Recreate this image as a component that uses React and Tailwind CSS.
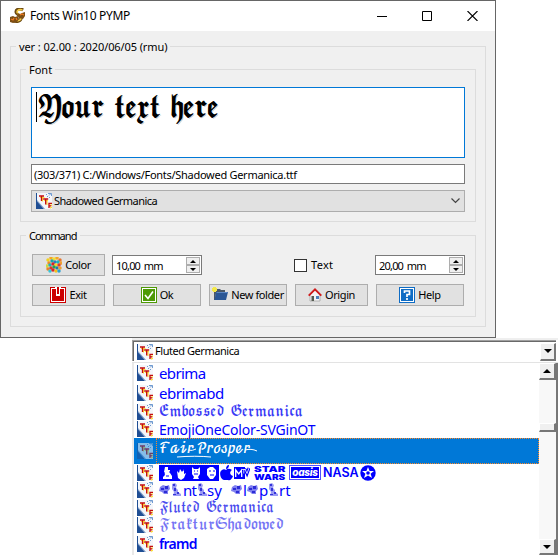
import React from "react";

const ui = "font-['Noto_Sans',sans-serif]";

function TtfIcon({ dim }) {
  return (
    <svg width="16" height="16" viewBox="0 0 16 16" className={"shrink-0 " + (dim ? "opacity-55" : "")}>
      <rect width="16" height="16" fill="#f4f6fa" />
      <path d="M0 0h1v8L8 16H0z" fill="#1f4e94" />
      <path d="M1 7L9 16H8L1 8.5z" fill="#7c9ac6" />
      <path d="M10 1.5h1M12 .5h1M11 3.5h1M13 2.5l2-2M13 .5h2.5v2.5M13 4.5h1" stroke="#6f9ad0" strokeWidth="1" fill="none" />
      <path d="M4 4.5h4.5M6.5 4v4.5M8 7.5h4M11 7v5M14.5 15.5V14.5H16M14 12.2h2" stroke="#ffe037" strokeWidth="1.2" fill="none" />
      <path d="M3 3h5M5.5 3v5M7.2 6h5M9.7 6v5.5M13 15V10.3H16M13 12.8H15.3" stroke="#c40d0d" strokeWidth="1.35" fill="none" />
    </svg>
  );
}

function AppIcon() {
  return (
    <svg width="17" height="16" viewBox="0 0 17 16" className="shrink-0">
      <path d="M14 2C11 0 7 1 7 4s5 3 5 6-4 4-7 3" stroke="#6d4a10" strokeWidth="3.2" fill="none" />
      <path d="M13.5 2C11 1 8 2 8 4s4 3 4 6-3 3-6 3" stroke="#f4cc48" strokeWidth="1.6" fill="none" />
      <path d="M1 9l3-1 2 1 3-1 1 3-2 3-4 1-3-1zM8 5l3 1 2-1 3-1v4l-2 3-4-1z" fill="#7d4f14" />
      <path d="M2 11l2 1 1-2M7 10l1 2M11 7l2-1 2 1" stroke="#ee7a22" strokeWidth="1.3" fill="none" />
    </svg>
  );
}

const dots = [
  [2, 3, "#f2d21b"], [5, 1, "#f5a623"], [8, 2, "#f0e030"], [11, 1, "#f5a623"], [14, 3, "#e8742c"],
  [3, 6, "#ef8a28"], [6, 4, "#1aa6a8"], [9, 5, "#2b7fc1"], [12, 5, "#19b4c0"], [15, 6, "#f0a030"],
  [1, 9, "#cfdc3a"], [4, 8, "#1fafb9"], [7, 7, "#d8232a"], [10, 8, "#f6d928"], [13, 8, "#de3b30"],
  [2, 12, "#e8842c"], [5, 11, "#d93a2c"], [8, 10, "#2ba24a"], [11, 11, "#1b7fb1"], [14, 11, "#f0a030"],
  [4, 14, "#35c5d8"], [7, 13, "#d8232a"], [10, 14, "#f2c21b"], [13, 14, "#2b9fd1"],
];

function ColorIcon() {
  return (
    <svg width="16" height="16" viewBox="0 0 16 16">
      {dots.map(([x, y, c], i) => <circle key={i} cx={x} cy={y} r="1.75" fill={c} />)}
    </svg>
  );
}

function ExitIcon() {
  return (
    <svg width="16" height="16" viewBox="0 0 16 16">
      <rect x=".5" y=".5" width="15" height="15" fill="#fff" stroke="#cc0000" />
      <path d="M2 2h4v7h4V2h4v12H2z" fill="#cc0000" />
      <path d="M5 0h6v2H5z" fill="#fff" />
      <path d="M7 0h2v7H7z" fill="#cc0000" />
    </svg>
  );
}

function OkIcon() {
  return (
    <svg width="16" height="16" viewBox="0 0 16 16">
      <rect x=".5" y=".5" width="15" height="15" fill="#fff" stroke="#4e9a06" />
      <path d="M2 2h12v12H2z" fill="#4e9a06" />
      <path d="M4 8l3 3.5L12 4.5" stroke="#fff" strokeWidth="1.6" fill="none" />
    </svg>
  );
}

function FolderIcon() {
  return (
    <svg width="16" height="16" viewBox="0 0 16 16">
      <path d="M2 2h6l1 1h4v3H4l-1 7H2z" fill="#4b5866" />
      <path d="M4 5h12l-2 8H2.5z" fill="#2b5796" />
      <path d="M4.5 5.5h11" stroke="#5a87c6" />
      <path d="M0 1h1V0h3v1h1v3H4v1H1V4H0z" fill="#f3e84a" />
    </svg>
  );
}

function HomeIcon() {
  return (
    <svg width="14" height="16" viewBox="0 0 14 16">
      <path d="M2 8l5-5 5 5v6H2z" fill="#f5f5f5" stroke="#a5a5a5" strokeWidth=".8" />
      <path d="M3.5 9H6v5H3.5z" fill="#555b52" />
      <path d="M8 9h3v3H8z" fill="#4f81bd" />
      <path d="M.7 8.6L7 2.3l6.3 6.3" stroke="#cf1b1b" strokeWidth="2" fill="none" />
    </svg>
  );
}

function HelpIcon() {
  return (
    <svg width="16" height="16" viewBox="0 0 16 16">
      <rect x=".5" y=".5" width="15" height="15" fill="#fff" stroke="#0f6cc4" />
      <path d="M2 2h12v12H2z" fill="#0f6cc4" />
      <path d="M5.5 6V4h5v3.5H8V10M8 11v2" stroke="#fff" strokeWidth="1.7" fill="none" />
    </svg>
  );
}

function Group({ title, className, legendClass = "", children }) {
  return (
    <fieldset className={"min-w-0 border border-[#dcdcdc] " + className}>
      <legend className={"ml-[5px] h-[15px] whitespace-nowrap px-[3px] leading-[15px] " + legendClass}>{title}</legend>
      {children}
    </fieldset>
  );
}

function Button({ icon, label, className }) {
  return (
    <button className={"flex h-[22px] items-center justify-center gap-[3px] whitespace-nowrap border border-[#adadad] bg-[#e1e1e1] " + className}>
      {icon}
      <span className="tracking-[-0.4px]">{label}</span>
    </button>
  );
}

function Spin({ value }) {
  return (
    <div className="flex h-5 w-[90px] justify-between border border-[#7a7a7a] bg-white py-px pr-px">
      <span className="pl-[3px] leading-[17px] tracking-[-0.8px] [word-spacing:1.5px]">{value}</span>
      <div className="flex w-[14px] flex-col">
        <span className="flex h-2 items-center justify-center border border-[#adadad] bg-[#efefef]">
          <svg width="6" height="3" viewBox="0 0 6 3"><path d="M3 0l3 3H0z" /></svg>
        </span>
        <span className="flex h-2 items-center justify-center border border-[#adadad] bg-[#efefef]">
          <svg width="6" height="3" viewBox="0 0 6 3"><path d="M3 3l3-3H0z" /></svg>
        </span>
      </div>
    </div>
  );
}

function ClassicButton({ dir, className }) {
  return (
    <div className={"flex items-center justify-center border border-b-2 border-r-2 border-white border-b-[#777] border-r-[#777] bg-[#f0f0f0] " + className}>
      {dir && (
        <svg width="8" height="4" viewBox="0 0 8 4"><path d={dir === "up" ? "M4 0l4 4H0z" : "M4 4l4-4H0z"} /></svg>
      )}
    </div>
  );
}

function Row({ className, children }) {
  return (
    <div className={"flex items-center pl-[3px] " + className}>
      <TtfIcon />
      <div className="ml-[6px] flex h-full items-center whitespace-nowrap text-[#0000ff]">{children}</div>
    </div>
  );
}

const fraktur = "origin-left whitespace-nowrap font-['DejaVu_Math_TeX_Gyre','DejaVu_Sans',serif]";

function Clip({ head }) {
  return (
    <svg width={head ? 12 : 10} height="14" viewBox={head ? "0 0 12 14" : "0 0 10 14"}>
      {head ? (
        <g>
          <path d="M1 4l3-2 3 1 3-1 1 4-2 2v3H5L3 9 0 8z" fill="#7f7ff0" />
          <path d="M2 5h3v2H2zM6 3h3v3H6zM5 8h3v2H5z" fill="#2c2cd6" />
        </g>
      ) : (
        <g>
          <path d="M1 1l3-1 2 2-1 3 2 2v2l3 2v2H2l1-4-2-3z" fill="#9a9af4" />
          <path d="M2 1h2v2H2zM3 5h2v3H3zM6 9h2v2H6zM2 11h3v1H2z" fill="#3434da" />
        </g>
      )}
    </svg>
  );
}

function Faces() {
  return (
    <svg width="91" height="16" viewBox="0 0 91 16">
      <path d="M0 0h60v16H0z" fill="#0000ff" />
      <g fill="#fff">
        <path d="M6 2h3v3h2v3l2 3v3H4v-2l2-2-1-3z" />
        <path d="M18 6l2 2 1-4 2 3 2-3v5l2-1-2 5-3 2-3-2z" />
        <path d="M33 2l2 2h4l2-2v7l-2 3 1 2h-6l1-2-2-3z" />
        <path d="M48 4l3-2h3l3 3v5l-3 4h-3l-3-4z" />
      </g>
      <path d="M4 8h2M10 7h2M7 11h3M35 6h1M38 6h1M35 9h4M50 6h2M54 6h2M51 10h4M17 3v3M24 2v4M45 2l3 3M44 9l4 1" stroke="#0000ff" strokeWidth="1" />
      <path d="M67 5c2-2 4-1 6 0-3 2-2 5 1 6-1 3-3 5-5 4h-3c-4 1-7-8-3-10 1-1 3-1 4 0zM67 4c0-2 1-4 3-4 0 2-1 4-3 4z" fill="#0000ff" />
      <path d="M75 2h11v12H75z" fill="#0000ff" />
      <path d="M76.7 12V5l3 4 3-4v7" stroke="#fff" strokeWidth="1.3" fill="none" />
      <path d="M83 4.5h3.5M84.8 4.5v4M86 4l2 4.5L90 3" stroke="#0000ff" strokeWidth="3" fill="none" />
      <path d="M83 4.5h3.5M84.8 4.5v4M86 4l2 4.5L90 3" stroke="#fff" strokeWidth=".8" fill="none" />
    </svg>
  );
}

export default function App() {
  return (
    <div className={"h-[558px] w-[558px] overflow-hidden bg-white text-[11px] text-black " + ui}>
      <div className="h-[338px] w-[496px] border border-[#666] bg-[#f0f0f0]">
        <div className="flex h-[30px] items-center bg-white pl-2">
          <AppIcon />
          <span className="ml-1 text-[12px] tracking-[-0.3px]">Fonts Win10 PYMP</span>
          <div className="ml-auto flex items-center gap-[35px] pr-[17px]">
            <svg width="10" height="10" viewBox="0 0 10 10"><path d="M0 5.5h10" stroke="#000" /></svg>
            <svg width="10" height="10" viewBox="0 0 10 10"><path d="M.5 .5h9v9h-9z" fill="none" stroke="#000" /></svg>
            <svg width="11" height="10" viewBox="0 0 11 10"><path d="M.5 0l10 10M10.5 0L.5 10" stroke="#000" strokeWidth="1.1" /></svg>
          </div>
        </div>

        <Group title="ver : 02.00 : 2020/06/05 (rmu)" legendClass="tracking-[-0.1px]" className="ml-[9px] mt-[8px] h-[288px] w-[476px]">
          <Group title="Font" className="ml-[9px] mt-[8px] h-[160px] w-[456px]">
            <div className="ml-[10px] mt-[10px] flex w-[434px] flex-col">
              <div className="h-[71px] border border-[#0078d7] bg-white pl-1 pt-1">
                <div className="h-[30px] border-l border-black">
                  <div aria-label="Your text here" className={"w-[190px] scale-x-[0.78] text-[29px] leading-[33px] tracking-[-2.2px] [word-spacing:6px] [text-shadow:0.8px_0_0_#000,2px_1px_0_#0003] " + fraktur}>𝖄𝖔𝖚𝖗 𝖙𝖊𝖝𝖙 𝖍𝖊𝖗𝖊</div>
                </div>
              </div>
              <div className="mt-[6px] h-5 border border-[#7a7a7a] bg-white pl-[2px] leading-[19px] tracking-[-0.28px]">(303/371) C:/Windows/Fonts/Shadowed Germanica.ttf</div>
              <div className="mt-[6px] flex h-[22px] items-center border border-[#adadad] bg-[#e1e1e1] pl-1 pr-1">
                <TtfIcon />
                <span className="ml-[2px] tracking-[-0.55px]">Shadowed Germanica</span>
                <svg className="ml-auto" width="9" height="6" viewBox="0 0 9 6"><path d="M.5 .5l4 4 4-4" fill="none" stroke="#444" strokeWidth="1.2" /></svg>
              </div>
            </div>
          </Group>

          <Group title="Command" legendClass="tracking-[-0.9px]" className="ml-[9px] mt-[6px] h-[89px] w-[456px]">
            <div className="ml-[11px] mt-[11px] w-[433px]">
              <div className="flex h-[22px] items-center">
                <Button icon={<ColorIcon />} label="Color" className="w-[73px]" />
                <div className="ml-[7px]"><Spin value="10,00 mm" /></div>
                <div className="ml-[92px] flex items-center gap-1">
                  <span className="h-[13px] w-[13px] border border-[#333] bg-white" />
                  <span className="tracking-[0.3px]">Text</span>
                </div>
                <div className="ml-auto"><Spin value="20,00 mm" /></div>
              </div>
              <div className="mt-2 flex gap-2">
                <Button icon={<ExitIcon />} label="Exit" className="w-[73px]" />
                <Button icon={<OkIcon />} label="Ok" className="w-[88px]" />
                <Button icon={<FolderIcon />} label="New folder" className="w-[78px]" />
                <Button icon={<HomeIcon />} label="Origin" className="w-[73px]" />
                <Button icon={<HelpIcon />} label="Help" className="w-[88px]" />
              </div>
            </div>
          </Group>
        </Group>
      </div>

      <div className="ml-[132px] flex h-[217px] w-[426px] flex-col">
        <div className="h-[2px] bg-[#efefef]" />
        <div className="flex h-[21px] w-[424px] items-stretch border-l border-t border-[#a0a0a0]">
          <div className="flex w-full items-center border-l border-t border-[#696969] bg-white pl-[3px]">
            <TtfIcon />
            <span className="ml-[2px] tracking-[-0.45px]">Fluted Germanica</span>
            <ClassicButton dir="down" className="ml-auto h-[18px] w-4" />
          </div>
        </div>
        <div className="h-[2px] border-b border-[#e3e3e3] bg-white" />
        <div className="flex h-[192px] border-l-2 border-r-2 border-l-[#e9e9e9] border-r-[#777]">
          <div className="w-[405px] text-[15px]">
            <Row className="h-5"><span className="tracking-[-0.6px]">ebrima</span></Row>
            <Row className="h-5"><span className="tracking-[-0.5px]">ebrimabd</span></Row>
            <Row className="h-[17px]"><span aria-label="Embossed Germanica" className={"scale-x-[0.77] text-[15px] leading-[17px] tracking-[-0.9px] [word-spacing:5px] text-[#3a3af5] " + fraktur}>𝕰𝖒𝖇𝖔𝖘𝖘𝖊𝖉 𝕲𝖊𝖗𝖒𝖆𝖓𝖎𝖈𝖆</span></Row>
            <Row className="h-[18px]"><span className="text-[14px] tracking-[-0.2px]">EmojiOneColor-SVGinOT</span></Row>
            <div className="flex h-[26px] items-center bg-[#0078d7] pl-[3px] text-white">
              <TtfIcon dim />
              <div className="ml-[3px] flex h-full flex-1 items-center border border-dotted border-[#ff8728] pl-[2px]">
                <div className="relative -mt-1">
                  <div aria-label="Fair Prosper" className={"w-[96px] scale-x-[0.8] text-[15px] leading-[20px] tracking-[-0.8px] [text-shadow:0.5px_0_0_#fff] " + fraktur}>ℱ𝒶𝒾𝓇 𝒫𝓇ℴ𝓈𝓅ℯ𝓇</div>
                  <svg className="absolute left-0 top-0" width="100" height="20" viewBox="0 0 100 20">
                    <path d="M30 11c3 1 4 0 7-1M18 18c12-1 24-1 34 0M86 11c4-1 8-1 12 1" stroke="#fff" fill="none" />
                  </svg>
                </div>
              </div>
            </div>
            <Row className="h-[17px]">
              <Faces />
              <div className="ml-[4px] w-[33px] font-['Inter',sans-serif] text-[8px] font-black leading-[8px]">
                <div className="w-[22px] origin-left scale-x-[1.45] leading-[8px]">STAR</div>
                <div className="w-[22px] origin-left scale-x-[1.25] leading-[8px]">WARS</div>
              </div>
              <div className="ml-[2px] flex h-[15px] w-8 items-center justify-center border border-[#5050ff] bg-white p-px">
                <span className="flex h-full w-full items-center justify-center bg-[#0000ff] pb-px font-['Inter',sans-serif] text-[10px] font-extrabold italic leading-[10px] tracking-[-0.3px] text-white">oasis</span>
              </div>
              <span className="ml-[2px] mt-[2px] w-[35px] font-['Inter',sans-serif] text-[12.5px] font-semibold">NASA</span>
              <svg className="ml-[2px]" width="16" height="16" viewBox="0 0 16 16">
                <circle cx="8" cy="8" r="7.7" fill="#0000ff" />
                <path d="M8 2l1.6 4H14l-3.4 2.7L12 13l-4-2.6L4 13l1.4-4.3L2 6h4.4z" fill="#fff" />
                <circle cx="8" cy="8" r="1.8" fill="#0000ff" />
              </svg>
            </Row>
            <Row className="h-[18px]">
              <Clip head /><Clip /><span className="ml-[2px] w-[14px] tracking-[-0.8px]">nt</span><Clip /><span className="w-[15px]">sy</span>
              <span className="w-[9px]" /><Clip head /><span className="w-[4px]">l</span><Clip head /><span className="w-[9px]">p</span><Clip /><span className="ml-[1px]">rt</span>
            </Row>
            <Row className="h-[17px]"><span aria-label="Fluted Germanica" className={"scale-x-[0.72] text-[15px] leading-[17px] tracking-[-0.9px] [word-spacing:6px] text-[#4a4aee] " + fraktur}>𝕱𝖑𝖚𝖙𝖊𝖉 𝕲𝖊𝖗𝖒𝖆𝖓𝖎𝖈𝖆</span></Row>
            <Row className="h-[17px]"><span aria-label="FrakturShadowed" className={"scale-x-[0.8] text-[15px] leading-[17px] tracking-[-0.8px] text-[#7575f4] " + fraktur}>𝕱𝖗𝖆𝖐𝖙𝖚𝖗𝕾𝖍𝖆𝖉𝖔𝖜𝖊𝖉</span></Row>
            <Row className="h-[21px]"><span className="text-[14px] font-semibold tracking-[-0.7px]">framd</span></Row>
          </div>
          <div className="flex w-[17px] flex-col bg-[#f8f8f8]">
            <ClassicButton dir="up" className="h-[17px]" />
            <div className="h-[43px]" />
            <ClassicButton className="h-[9px]" />
            <div className="flex-1" />
            <ClassicButton dir="down" className="h-4" />
          </div>
        </div>
      </div>
    </div>
  );
}
